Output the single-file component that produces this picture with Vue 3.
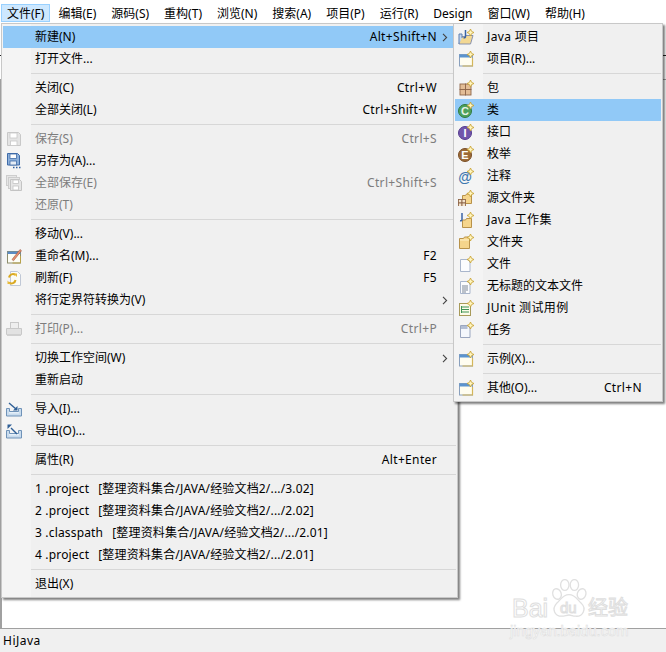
<template>
  <div class="window">
    <div class="menubar">
      <span
        v-for="(m, i) in menus"
        :key="m"
        class="menubar-item"
        :class="{ active: i === 0 }"
      >{{ m }}</span>
    </div>
    <div class="toolbar"></div>
    <div class="tabs"></div>
    <div class="editor"></div>
    <div class="statusbar">HiJava</div>

    <div class="menu file-menu">
      <template v-for="(item, i) in fileItems" :key="i">
        <div v-if="item.sep" class="sep"></div>
        <div
          v-else
          class="row"
          :class="{ selected: item.selected, disabled: item.disabled, recent: item.path }"
        >
          <svg class="icon" viewBox="0 0 16 16" v-html="item.icon ? icons[item.icon] : ''"></svg>
          <span class="label">{{ item.label }}<span v-if="item.path" class="path">{{ item.path }}</span></span>
          <span class="shortcut">{{ item.key }}</span>
          <span class="arrow">
            <svg v-if="item.more" width="6" height="9" viewBox="0 0 6 9">
              <path d="M1 .8 4.600 4.500 1 8.200" fill="none" stroke="#444" stroke-width="1.100" />
            </svg>
          </span>
        </div>
      </template>
    </div>

    <div class="menu new-menu">
      <template v-for="(item, i) in newItems" :key="i">
        <div v-if="item.sep" class="sep"></div>
        <div v-else class="row" :class="{ selected: item.selected, wide: item.wide }">
          <svg class="icon" viewBox="0 0 16 16" v-html="icons[item.icon]"></svg>
          <span class="label">{{ item.label }}</span>
          <span class="shortcut">{{ item.key }}</span>
          <span class="arrow"></span>
        </div>
      </template>
    </div>

    <div class="watermark">
      <svg class="paw" width="36" height="39" viewBox="0 0 60 65">
        <g fill="#fff" stroke="#e0e0e0" stroke-width="2.200">
          <ellipse cx="10" cy="25" rx="7" ry="9" transform="rotate(-20 10 25)" />
          <ellipse cx="23" cy="10" rx="7" ry="9" />
          <ellipse cx="39" cy="10" rx="7" ry="9" />
          <ellipse cx="51" cy="25" rx="7" ry="9" transform="rotate(20 51 25)" />
          <path d="M30 26c11 0 14 9 21 15 8 8 3 22-10 21-5 0-7-2-11-2s-7 2-12 2c-12 0-17-12-9-21 7-6 10-15 21-15z" />
        </g>
      </svg>
      <span class="wm-bai">Bai</span>
      <span class="wm-du">du</span>
      <span class="wm-jy">经验</span>
      <span class="wm-url">jingyan.baidu.com</span>
    </div>
  </div>
</template>

<script setup>
const menus = ['文件(F)', '编辑(E)', '源码(S)', '重构(T)', '浏览(N)', '搜索(A)', '项目(P)', '运行(R)', 'Design', '窗口(W)', '帮助(H)']

// little gold sparkle eclipse puts on every "new ..." icon
const star = '<path d="M12.500 0 13.600 2.400 16 3.500 13.600 4.600 12.500 7 11.400 4.600 9 3.500 11.400 2.400z" fill="#fff6bf" stroke="#c8a02c" stroke-width=".8"/>'
const txt = (s, x, y, size, fill) => `<text x="${x}" y="${y}" font-family="Liberation Sans" font-weight="700" font-size="${size}" text-anchor="middle" fill="${fill}">${s}</text>`
const folder = '<path d="M1.500 14.500v-10h4l1-1.500h5v11.500z" fill="#f5d58c" stroke="#b8924a"/><path d="M2 6h9" stroke="#fff2c8"/>'
const grid = (x, y, s) => `<g fill="#e3bd96" stroke="#8f6649" stroke-width=".9"><rect x="${x}" y="${y}" width="${s}" height="${s}"/><rect x="${x + s}" y="${y}" width="${s}" height="${s}"/><rect x="${x}" y="${y + s}" width="${s}" height="${s}"/><rect x="${x + s}" y="${y + s}" width="${s}" height="${s}"/></g>`
const page = '<path d="M2.500 3.500h7l2.500 2.500v9.500h-9.500z" fill="#fbfcfe" stroke="#a9b6cc"/>'
const floppy = (c, b) => `<path d="M1.500 1.500h11l2 2v11h-13z" fill="${b}" stroke="${c}"/><rect x="4" y="2" width="7" height="5" fill="#fff" stroke="${c}" stroke-width=".8"/><rect x="4.500" y="10" width="6.500" height="4.500" fill="#fff" stroke="${c}" stroke-width=".8"/>`
const tray = (arrow) => `<path d="M.5 7.500h3v3h9v-3h3v7.500h-15z" fill="#c9dcee" stroke="#6f92b8"/><path d="M3 11h10v1.500h-10z" fill="#e5eff8"/>${arrow}`
const win = '<rect x="1.500" y="3.500" width="13" height="11.500" fill="#fffdf0" stroke="#8aa0bd"/><rect x="1.500" y="3.500" width="12" height="3" fill="#5b93cf"/><path d="M14.500 7v8h-10" fill="none" stroke="#d4b65a" stroke-width="1.200"/>'

const icons = {
  javaProject: '<path d="M1 15 3 7.500h4l1-1h7l-2.500 8.500z" fill="#f3d893" stroke="#8a93ad"/><path d="M1 15V5h3v4" fill="#c5d7ee" stroke="#5d7fb0"/><path d="M7.500 1v6.500q0 1.500-2 1.200" fill="none" stroke="#3a63a5" stroke-width="1.500"/>' + star,
  window: win + star,
  package: grid(2, 4, 5.5) + star,
  class: '<circle cx="7" cy="9" r="6.500" fill="#4fa15c" stroke="#2f7a3f"/>' + txt('C', 7, 13, 11, '#e8f2ea') + star,
  iface: '<circle cx="7" cy="9" r="6.500" fill="#7156ab" stroke="#553b8f"/>' + txt('I', 7, 13, 11, '#fff') + star,
  enum: '<circle cx="7" cy="9" r="6.500" fill="#9c6a38" stroke="#7a4f26"/>' + txt('E', 7, 13, 11, '#fff') + star,
  annotation: txt('@', 7, 14, 14, '#3f78b0') + star,
  srcFolder: '<path d="M4.500 13.500v-8h3l1-1.500h5v9.500z" fill="#f5d58c" stroke="#b8924a"/>' + grid(.5, 9.5, 3.5).replace(/#e3bd96/g, '#f3e3cc') + star,
  workingSet: '<path d="M4.500 15.500V8h3l1-1.500h5v9z" fill="#f5d58c" stroke="#b8924a"/><path d="M4 1v6.500q0 1.500-2 1.200" fill="none" stroke="#3a63a5" stroke-width="1.500"/>' + star,
  folder: folder + star,
  file: page + star,
  textFile: page + '<path d="M4 8h6M4 10h6M4 12h6M4 14h4" stroke="#7c8797"/>' + star,
  junit: '<rect x="1.500" y="3.500" width="11" height="12" fill="#fdfbe9" stroke="#a89a5a"/><path d="M4 7h7M4 9.500h7M4 12h7" stroke="#3f9355" stroke-width="1.200"/><path d="M3.500 6v7" stroke="#3f9355"/>' + star,
  task: '<path d="M2.500 3.500h7l2.500 2.500v9.500h-9.500z" fill="#f4f7fc" stroke="#9aa6bf"/><rect x="3" y="4" width="6.500" height="3" fill="#b3bed4"/>' + star,
  saveOff: floppy('#c8c8c8', '#e4e4e4'),
  saveAs: '<path d="M1.500 .5h10l2 2v9.500h-12z" fill="#8db0da" stroke="#3f6ba8"/><rect x="4" y="1" width="6.500" height="4.500" fill="#fff" stroke="#3f6ba8" stroke-width=".8"/><rect x="4" y="8" width="6.500" height="4" fill="#e6edf6" stroke="#3f6ba8" stroke-width=".8"/><path d="M7 14.500h1.500M10 14.500h1.500M13 14.500h1.500" stroke="#2f5f9f" stroke-width="1.500"/>',
  saveAllOff: '<rect x=".5" y=".5" width="10" height="10" fill="#e6e6e6" stroke="#cdcdcd"/><rect x="2.500" y="2.500" width="11" height="11" fill="#e6e6e6" stroke="#cdcdcd"/><path d="M4.500 4.500h9l2 2v9h-11z" fill="#e6e6e6" stroke="#c4c4c4"/><rect x="7" y="5" width="5.500" height="3.500" fill="#fff" stroke="#c4c4c4" stroke-width=".8"/><rect x="7" y="11" width="5.500" height="4" fill="#fff" stroke="#c4c4c4" stroke-width=".8"/>',
  rename: '<rect x="1.500" y="3.500" width="13" height="11.500" fill="#fdfdf5" stroke="#8c8c6c"/><rect x="1.500" y="3.500" width="13" height="2.500" fill="#5b8bc4"/><path d="M14.500 8v7h-8" fill="none" stroke="#b9a24a"/><path d="M6 11.500 14 1.500l1.500 1.200L7.500 12.800z" fill="#e98f70" stroke="#9b5a43" stroke-width=".6"/>',
  refresh: '<path d="M4.500 1.500h7l3 3v11h-10z" fill="#fcfcf6" stroke="#c0c8d6"/><path d="M3 7.500a4 4 0 0 1 6.500-2.500M9.500 10a4 4 0 0 1-6.500 2.500" fill="none" stroke="#d9a81f" stroke-width="2"/><path d="M7.500 3.500h3.500v3.500zM5 14H1.500v-3.500z" fill="#e8bb3a"/>',
  printOff: '<rect x="4.500" y="1.500" width="8" height="6" fill="#eee" stroke="#c8c8c8"/><path d="M.5 7.500h15v6h-15z" fill="#e2e2e2" stroke="#c8c8c8"/><rect x="1" y="13" width="14" height="2" fill="#d0d0d0"/>',
  import: tray('<path d="M3 2 10 8" stroke="#2e5f96" stroke-width="1.400"/><path d="M7 9.500h4.500V5z" fill="#2e5f96"/>'),
  export: tray('<path d="M5 5 11 11" stroke="#2e5f96" stroke-width="1.400"/><path d="M1.500 1.500H6L1.500 6z" fill="#2e5f96"/>')
}

const fileItems = [
  { label: '新建(N)', key: 'Alt+Shift+N', more: true, selected: true },
  { label: '打开文件...' },
  { sep: true },
  { label: '关闭(C)', key: 'Ctrl+W' },
  { label: '全部关闭(L)', key: 'Ctrl+Shift+W' },
  { sep: true },
  { label: '保存(S)', key: 'Ctrl+S', icon: 'saveOff', disabled: true },
  { label: '另存为(A)...', icon: 'saveAs' },
  { label: '全部保存(E)', key: 'Ctrl+Shift+S', icon: 'saveAllOff', disabled: true },
  { label: '还原(T)', disabled: true },
  { sep: true },
  { label: '移动(V)...' },
  { label: '重命名(M)...', key: 'F2', icon: 'rename' },
  { label: '刷新(F)', key: 'F5', icon: 'refresh' },
  { label: '将行定界符转换为(V)', more: true },
  { sep: true },
  { label: '打印(P)...', key: 'Ctrl+P', icon: 'printOff', disabled: true },
  { sep: true },
  { label: '切换工作空间(W)', more: true },
  { label: '重新启动' },
  { sep: true },
  { label: '导入(I)...', icon: 'import' },
  { label: '导出(O)...', icon: 'export' },
  { sep: true },
  { label: '属性(R)', key: 'Alt+Enter' },
  { sep: true },
  { label: '1 .project', path: '[整理资料集合/JAVA/经验文档2/.../3.02]' },
  { label: '2 .project', path: '[整理资料集合/JAVA/经验文档2/.../2.02]' },
  { label: '3 .classpath', path: '[整理资料集合/JAVA/经验文档2/.../2.01]' },
  { label: '4 .project', path: '[整理资料集合/JAVA/经验文档2/.../2.01]' },
  { sep: true },
  { label: '退出(X)' }
]

const newItems = [
  { label: 'Java 项目', icon: 'javaProject', wide: true },
  { label: '项目(R)...', icon: 'window' },
  { sep: true },
  { label: '包', icon: 'package' },
  { label: '类', icon: 'class', selected: true },
  { label: '接口', icon: 'iface' },
  { label: '枚举', icon: 'enum' },
  { label: '注释', icon: 'annotation' },
  { label: '源文件夹', icon: 'srcFolder' },
  { label: 'Java 工作集', icon: 'workingSet', wide: true },
  { label: '文件夹', icon: 'folder' },
  { label: '文件', icon: 'file' },
  { label: '无标题的文本文件', icon: 'textFile' },
  { label: 'JUnit 测试用例', icon: 'junit', wide: true },
  { label: '任务', icon: 'task' },
  { sep: true },
  { label: '示例(X)...', icon: 'window' },
  { sep: true },
  { label: '其他(O)...', key: 'Ctrl+N', icon: 'window' }
]
</script>

<style>
body {
  margin: 0;
  overflow: hidden;
}
</style>

<style scoped>
.window {
  position: relative;
  display: flex;
  flex-direction: column;
  width: 666px;
  height: 652px;
  overflow: hidden;
  background: #fff;
  color: #000;
  font-family: "Noto Sans", "Noto Sans CJK SC", sans-serif;
  font-size: 12px;
}

.menubar {
  display: flex;
  height: 23px;
  padding: 4px 0 0 1px;
  box-sizing: border-box;
}

.menubar-item {
  height: 18px;
  padding: 0 6px 0 5px;
  margin-right: 2px;
  line-height: 17px;
  border: 1px solid transparent;
  box-sizing: border-box;
  white-space: nowrap;
}

.menubar-item.active {
  padding-right: 5px;
  background: #cde8ff;
  border-color: #99d1ff;
}

.toolbar {
  height: 33px;
  border-bottom: 1px solid #222;
  box-sizing: border-box;
}

.tabs {
  height: 24px;
  border-bottom: 1px solid #a0a0a0;
  box-sizing: border-box;
}

.editor {
  flex: 1;
  border-left: 2px solid #a0a0a0;
  border-bottom: 1px solid #a0a0a0;
}

.statusbar {
  height: 23px;
  padding-left: 3px;
  line-height: 23px;
  letter-spacing: 0.5px;
  background: #f0f0f0;
}

.menu {
  position: absolute;
  top: 23px;
  padding: 2px 1px;
  border: 1px solid #c8c8c8;
  box-sizing: border-box;
  background: linear-gradient(90deg, #f4f4f4 29px, #f0f0f0 29px);
  box-shadow: 2px 2px 2px rgba(0, 0, 0, 0.5);
}

.file-menu {
  left: 1px;
  width: 457px;
}

.new-menu {
  left: 453px;
  width: 210px;
}

.row {
  display: flex;
  align-items: center;
  height: 22px;
  padding-left: 3px;
  white-space: nowrap;
}

.row.selected {
  background: #91c9f7;
}

.row.disabled {
  color: #7d7d7d;
}

.row.recent {
  letter-spacing: 0.17px;
}

.row.wide .label {
  letter-spacing: 0.35px;
}

.icon {
  flex: none;
  width: 16px;
  height: 16px;
  margin-right: 13px;
}

.label {
  flex: 1;
  padding-bottom: 2px;
}

.shortcut {
  padding-bottom: 2px;
  letter-spacing: 0.35px;
}

.path {
  margin-left: 9px;
}

.arrow {
  display: flex;
  flex: none;
  align-items: center;
  justify-content: flex-end;
  width: 19px;
  padding-right: 8px;
  box-sizing: border-box;
}

.sep {
  height: 1px;
  margin: 3px 0 3px 28px;
  background: #d7d7d7;
}

.watermark {
  position: absolute;
  left: 508px;
  top: 578px;
  width: 126px;
  height: 60px;
  pointer-events: none;
}

.paw {
  position: absolute;
  left: 43px;
  top: 1px;
}

.wm-bai,
.wm-du,
.wm-jy,
.wm-url {
  position: absolute;
  color: #fff;
  -webkit-text-stroke: 1px #dedede;
  font-family: "Liberation Sans", "Noto Sans CJK SC", sans-serif;
  line-height: 1;
}

.wm-bai {
  left: 4px;
  top: 18px;
  font-size: 25px;
}

.wm-du {
  left: 52px;
  top: 22px;
  font-size: 15px;
}

.wm-jy {
  left: 80px;
  top: 20px;
  font-size: 20px;
}

.wm-url {
  left: 2px;
  top: 46px;
  font-size: 14.700px;
  -webkit-text-stroke: 0.6px #dedede;
}
</style>
